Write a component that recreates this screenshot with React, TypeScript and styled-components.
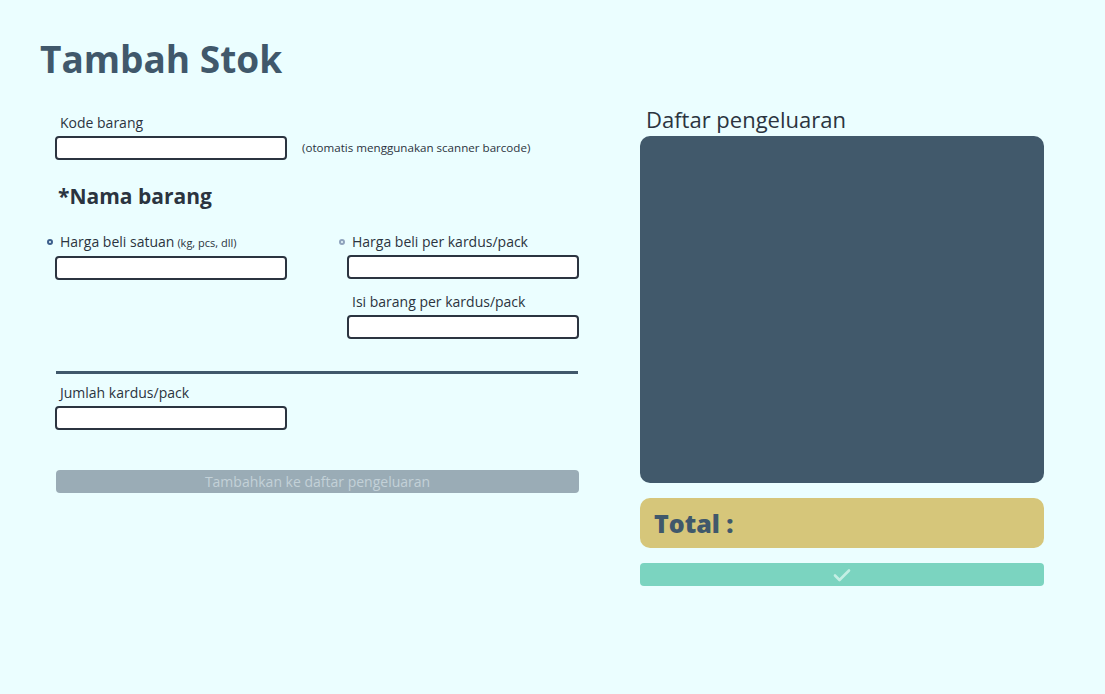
import React from "react";
import styled, { createGlobalStyle } from "styled-components";

const Global = createGlobalStyle`
  html, body { margin: 0; padding: 0; background: #ebfeff; }
  body { font-family: "Open Sans", "Noto Sans", sans-serif; color: #2b3440; }
  * { box-sizing: border-box; }
`;

const Page = styled.div`
  width: 1105px;
  height: 694px;
  padding: 35px 61px 0 40px;
  background: #ebfeff;
`;

const Title = styled.h1`
  margin: 0;
  font-size: 37px;
  line-height: 48px;
  font-weight: 700;
  color: #40586b;
`;

const Columns = styled.div`
  display: flex;
  justify-content: space-between;
  margin-top: 25px;
`;

const FormCol = styled.div`
  width: 540px;
  padding: 6px 0 0 15px;
  display: flex;
  flex-direction: column;
`;

const Row = styled.div`
  display: flex;
  align-items: flex-end;
  gap: 15px;
`;

const Field = styled.div`
  display: flex;
  flex-direction: column;
  gap: 4px;
  width: 232px;
`;

const Label = styled.label`
  display: flex;
  align-items: baseline;
  padding-left: 5px;
  font-size: 14px;
  line-height: 18px;
  color: #2b3440;
  position: relative;
  white-space: nowrap;
`;

const Small = styled.span`
  font-size: 11px;
  margin-left: 3px;
`;

const Dot = styled.span<{ $active?: boolean }>`
  position: absolute;
  left: -8px;
  top: 6px;
  width: 6px;
  height: 6px;
  border-radius: 50%;
  border: 2px solid ${(p) => (p.$active ? "#3d5f8c" : "#8fa3bd")};
`;

const Input = styled.input`
  width: 232px;
  height: 24px;
  border: 2px solid #2b3440;
  border-radius: 4px;
  background: #fff;
  outline: none;
`;

const Hint = styled.span`
  font-size: 11.6px;
  line-height: 24px;
  color: #2b3440;
`;

const Heading = styled.h2`
  margin: 20px 0 0 3px;
  font-size: 21px;
  line-height: 32px;
  font-weight: 700;
  color: #2b3440;
`;

const Grid = styled.div`
  display: grid;
  grid-template-columns: 232px 232px;
  column-gap: 60px;
  row-gap: 13px;
  margin-top: 21px;
`;

const Divider = styled.hr`
  margin: 32px 0 0 1px;
  width: 522px;
  border: none;
  height: 3px;
  background: #40586b;
`;

const JumlahField = styled(Field)`
  margin-top: 10px;
`;

const Disabled = styled.button`
  margin: 40px 0 0 1px;
  width: 523px;
  height: 23px;
  border: none;
  border-radius: 4px;
  background: #9aacb6;
  color: #c3d1d8;
  font-family: inherit;
  font-size: 14px;
`;

const Aside = styled.div`
  width: 404px;
  display: flex;
  flex-direction: column;
`;

const AsideTitle = styled.h3`
  margin: -1px 0 5px 6px;
  font-size: 22px;
  line-height: 24px;
  font-weight: 400;
  color: #2b3440;
`;

const ListPanel = styled.div`
  height: 347px;
  border-radius: 10px;
  background: #41596b;
`;

const TotalBox = styled.div`
  margin-top: 15px;
  height: 50px;
  border-radius: 10px;
  background: #d6c67a;
  display: flex;
  align-items: center;
  padding-left: 14px;
  font-size: 25px;
  font-weight: 800;
  color: #40586b;
`;

const Confirm = styled.button`
  margin-top: 15px;
  height: 23px;
  border: none;
  border-radius: 4px;
  background: #7bd4c0;
  display: flex;
  align-items: center;
  justify-content: center;
`;

export default function App() {
  return (
    <>
      <Global />
      <Page>
        <Title>Tambah Stok</Title>
        <Columns>
          <FormCol>
            <Row>
              <Field>
                <Label>Kode barang</Label>
                <Input />
              </Field>
              <Hint>(otomatis menggunakan scanner barcode)</Hint>
            </Row>
            <Heading>*Nama barang</Heading>
            <Grid>
              <Field>
                <Label>
                  <Dot $active />
                  Harga beli satuan<Small>(kg, pcs, dll)</Small>
                </Label>
                <Input />
              </Field>
              <Field>
                <Label>
                  <Dot />
                  Harga beli per kardus/pack
                </Label>
                <Input />
              </Field>
              <div />
              <Field>
                <Label>Isi barang per kardus/pack</Label>
                <Input />
              </Field>
            </Grid>
            <Divider />
            <JumlahField>
              <Label>Jumlah kardus/pack</Label>
              <Input />
            </JumlahField>
            <Disabled disabled>Tambahkan ke daftar pengeluaran</Disabled>
          </FormCol>
          <Aside>
            <AsideTitle>Daftar pengeluaran</AsideTitle>
            <ListPanel />
            <TotalBox>Total :</TotalBox>
            <Confirm>
              <svg width="18" height="14" viewBox="0 0 18 14" fill="none">
                <path d="M2 7.5l4.5 4.5L16 2.5" stroke="#c4efe4" strokeWidth="2.6" strokeLinecap="round" strokeLinejoin="round" />
              </svg>
            </Confirm>
          </Aside>
        </Columns>
      </Page>
    </>
  );
}
